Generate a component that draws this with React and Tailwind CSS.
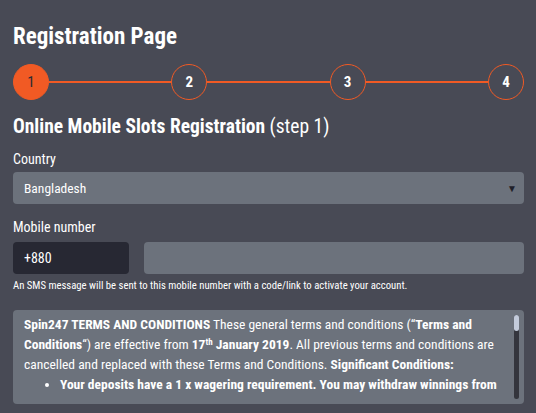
function Step({ n, active }) {
  return (
    <div
      className={
        "flex h-9 w-9 shrink-0 items-center justify-center rounded-full border border-[#f15a24] text-[15px] " +
        (active ? "bg-[#f15a24] font-normal text-[#2a2b33]" : "font-bold text-white")
      }
    >
      {n}
    </div>
  );
}

function Line() {
  return <div className="h-[2px] flex-1 bg-[#f15a24]" />;
}

export default function App() {
  return (
    <div
      className="min-h-[413px] bg-[#484a55] pl-[13px] pr-[12px] pt-[21px] text-white"
      style={{ fontFamily: '"Roboto Condensed", "Open Sans", sans-serif' }}
    >
      <h1 className="text-[23px] font-bold leading-[32px]">Registration Page</h1>

      <div className="mt-[11px] flex items-center">
        <Step n="1" active />
        <Line />
        <Step n="2" />
        <Line />
        <Step n="3" />
        <Line />
        <Step n="4" />
      </div>

      <h2 className="mt-[14px] text-[19.5px] leading-[26px]">
        <span className="font-bold">Online Mobile Slots Registration</span> (step 1)
      </h2>

      <label className="mt-[9px] block text-[14px] leading-[20px]">Country</label>
      <div className="mt-[3px] flex h-8 items-center justify-between rounded bg-[#6c727c] pl-[11px] pr-[7px] text-[13.5px]">
        <span>Bangladesh</span>
        <span className="text-[10px] text-[#1f2029]">▼</span>
      </div>

      <label className="mt-[13px] block text-[14px] leading-[20px]">Mobile number</label>
      <div className="mt-[5px] flex h-8 gap-[15px]">
        <div className="flex w-[116px] items-center rounded bg-[#272833] pl-[11px] text-[14px]">+880</div>
        <div className="flex-1 rounded bg-[#6c727c]" />
      </div>
      <p className="mt-[5px] text-[10.7px] leading-[14px]">
        An SMS message will be sent to this mobile number with a code/link to activate your account.
      </p>

      <div className="relative mt-[17px] h-[94px] rounded bg-[#6c727c] py-[4px] pl-[11px] pr-[20px] text-[13.5px] leading-[20px]">
        <div className="h-[82px] overflow-hidden">
          <p>
            <b>Spin247 TERMS AND CONDITIONS</b> These general terms and conditions (“<b>Terms and Conditions</b>“) are
            effective from{" "}
            <b>
              17<sup className="text-[9px] leading-none">th</sup> January 2019
            </b>
            . All previous terms and conditions are cancelled and replaced with these Terms and Conditions.{" "}
            <b>Significant Conditions:</b>
          </p>
          <ul className="list-disc pl-[36px] font-bold">
            <li>Your deposits have a 1 x wagering requirement. You may withdraw winnings from</li>
          </ul>
        </div>
        <div className="absolute right-[5px] top-[5px] h-[84px] w-[5px] rounded-sm bg-[#34353d]">
          <div className="h-4 rounded-sm bg-[#c3cbdb]" />
        </div>
      </div>
    </div>
  );
}
